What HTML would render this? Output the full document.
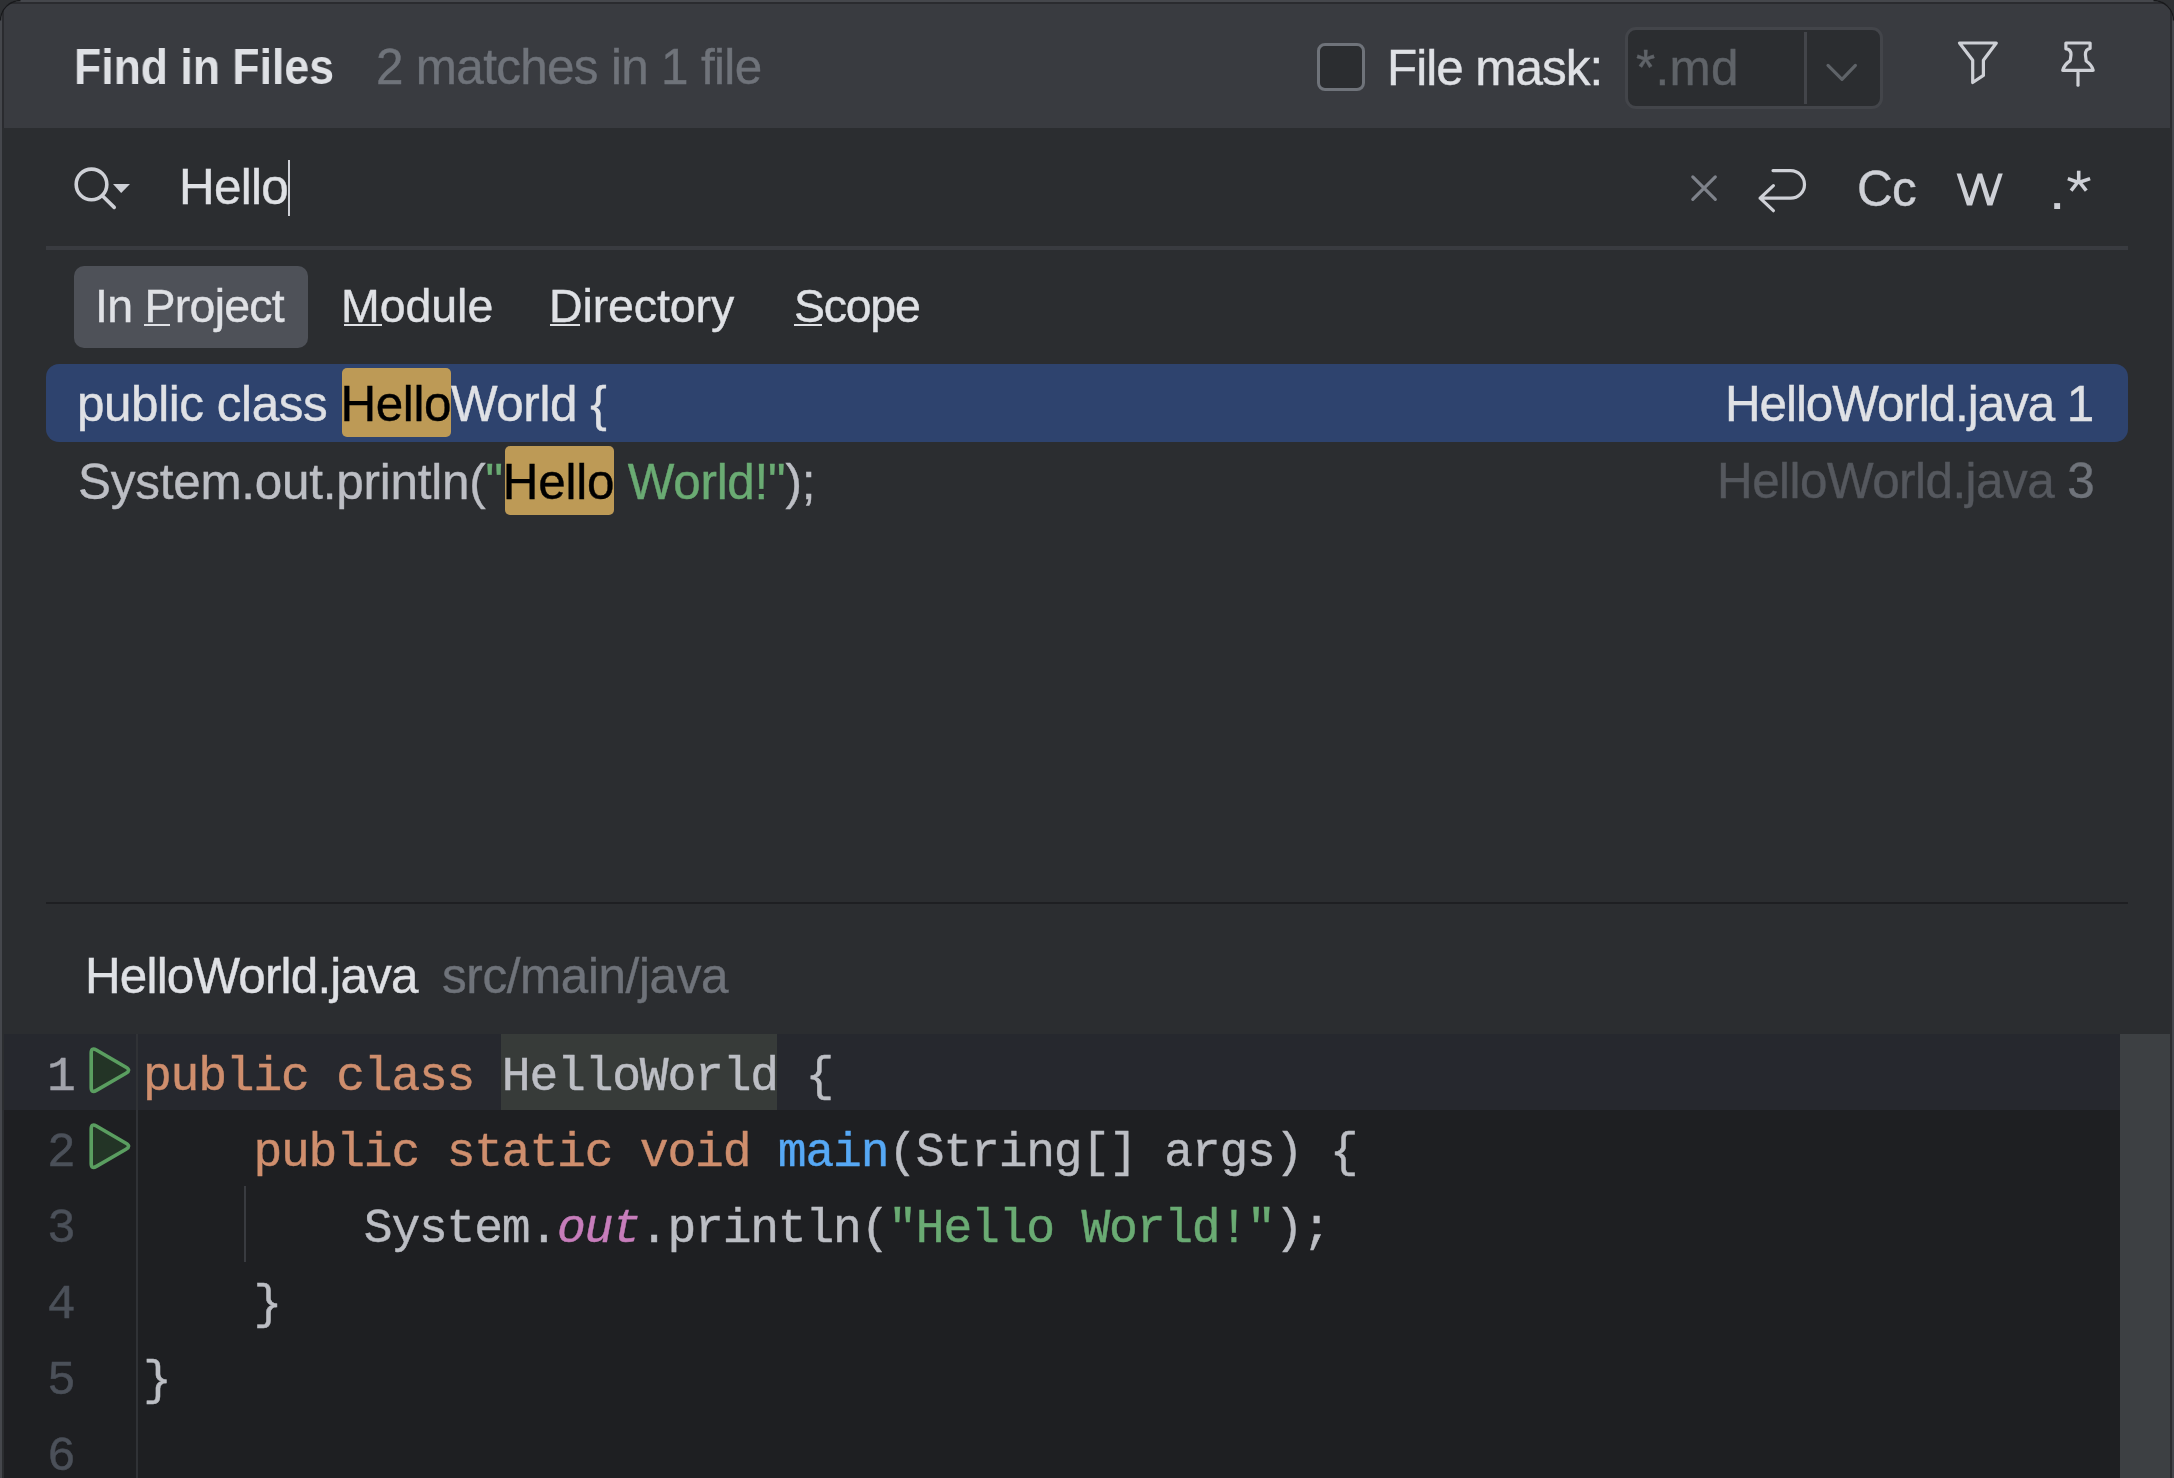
<!DOCTYPE html><html><head><meta charset="utf-8"><style>html,body{margin:0;padding:0;width:2174px;height:1478px;overflow:hidden;background:#45474C}</style></head><body><div style="position:absolute;left:0px;top:0px;width:2174px;height:1478px;background:#2E3033;"></div><div style="position:absolute;left:0;top:0;width:2174px;height:1478px;background:#45474C;border-radius:20px 20px 0 0;overflow:hidden;"><div style="position:absolute;left:2px;top:2px;width:2170px;height:1500px;background:#2A2B2F;"></div><div style="position:absolute;left:2px;top:128px;width:2170px;height:1400px;background:#2B2D30;"></div><div style="position:absolute;left:4px;top:4px;width:2166px;height:124px;background:#393B40;"></div></div><svg style="position:absolute;left:0;top:0" width="2174" height="30"><path d="M0.5,20.5 A20,20 0 0 1 20.5,0.5" fill="none" stroke="#18191B" stroke-width="1.3"/><path d="M2153.5,0.5 A20,20 0 0 1 2173.5,20.5" fill="none" stroke="#18191B" stroke-width="1.3"/></svg><div style="position:absolute;left:73.90px;top:37.38px;font-family:'Liberation Sans', sans-serif;font-size:49.4px;line-height:59px;font-weight:700;letter-spacing:0px;color:#DFE1E5;white-space:pre;-webkit-text-stroke-width:0.0px;will-change:transform;transform:scaleX(0.902);transform-origin:0 0;">Find in Files</div><div style="position:absolute;left:376.21px;top:37.38px;font-family:'Liberation Sans', sans-serif;font-size:49.4px;line-height:59px;font-weight:400;letter-spacing:-0.664px;color:#6F737A;white-space:pre;-webkit-text-stroke-width:0.4px;will-change:transform;">2 matches in 1 file</div><div style="position:absolute;left:1317px;top:43px;width:42px;height:42px;border:3.5px solid #6F737A;border-radius:8px;background:#2B2D30;"></div><div style="position:absolute;left:1387.44px;top:37.68px;font-family:'Liberation Sans', sans-serif;font-size:49.4px;line-height:59px;font-weight:400;letter-spacing:-0.989px;color:#DFE1E5;white-space:pre;-webkit-text-stroke-width:0.4px;will-change:transform;">File mask:</div><div style="position:absolute;left:1625px;top:27px;width:252px;height:76px;border:3px solid #43454A;border-radius:11px;background:#2B2D30;"></div><div style="position:absolute;left:1804px;top:32px;width:3px;height:72px;background:#43454A;"></div><div style="position:absolute;left:1636.36px;top:37.68px;font-family:'Liberation Sans', sans-serif;font-size:49.4px;line-height:59px;font-weight:400;letter-spacing:0.267px;color:#5F6368;white-space:pre;-webkit-text-stroke-width:0.4px;will-change:transform;">*.md</div><svg style="position:absolute;left:0;top:0" width="2174" height="130"><polyline points="1828,65.4 1842,79.4 1855.4,65.4" fill="none" stroke="#5F6368" stroke-width="3.2" stroke-linecap="round" stroke-linejoin="round"/><path d="M1959.5,43 L1996.3,43 L1983.4,60.2 L1983.4,75.4 L1972.7,82.5 L1972.7,60.2 Z" fill="none" stroke="#CED0D6" stroke-width="3.2" stroke-linejoin="round"/><path d="M2065.9,43 L2090.1,43 L2090.1,48.5 Q2085.4,49 2085.4,54.7 L2086.2,61 Q2092,65 2093.2,70.3 L2062.7,70.3 Q2064,65 2070.2,60.6 L2071,54.7 Q2071,49 2065.9,48.8 Z" fill="none" stroke="#CED0D6" stroke-width="3.2" stroke-linejoin="round"/><line x1="2078" y1="72.7" x2="2078" y2="85.2" stroke="#CED0D6" stroke-width="3.2" stroke-linecap="round"/></svg><svg style="position:absolute;left:0;top:130px" width="2174" height="100"><circle cx="91.5" cy="54.4" r="15.3" fill="none" stroke="#CED0D6" stroke-width="3.6"/><line x1="102.6" y1="66" x2="114.2" y2="77.4" stroke="#CED0D6" stroke-width="3.6" stroke-linecap="round"/><path d="M113,53.9 L130,53.9 L121.2,63.1 Z" fill="#CED0D6"/><line x1="1692.8" y1="46.9" x2="1715.3" y2="69.3" stroke="#7E828A" stroke-width="3.2" stroke-linecap="round"/><line x1="1715.3" y1="46.9" x2="1692.8" y2="69.3" stroke="#7E828A" stroke-width="3.2" stroke-linecap="round"/><path d="M1773,40.6 L1790.7,40.6 A13.8,13.8 0 0 1 1790.7,68.2 L1760.1,68.2 M1773.4,55.7 L1760.1,68.2 L1773.4,80.7" fill="none" stroke="#CED0D6" stroke-width="3.2" stroke-linecap="round" stroke-linejoin="round"/><rect x="2054.2" y="73.1" width="5.9" height="5.9" fill="#CED0D6"/><path d="M1956.6,43.5 L1961,43.5 L1969.3,68.3 L1977.6,43.5 L1982.1,43.5 L1990,68.3 L1998.3,43.5 L2002.8,43.5 L1992.4,75.5 L1987.3,75.5 L1979.8,51 L1972.1,75.5 L1966.9,75.5 Z" fill="#CED0D6"/><g stroke="#CED0D6" stroke-width="3.6"><line x1="2078.7" y1="40.7" x2="2078.7" y2="54"/><line x1="2067.8" y1="48.6" x2="2078.7" y2="52.5"/><line x1="2090.1" y1="48.6" x2="2078.7" y2="52.5"/><line x1="2071.1" y1="60.6" x2="2078.7" y2="51"/><line x1="2086.3" y1="60.6" x2="2078.7" y2="51"/></g></svg><div style="position:absolute;left:179.44px;top:157.48px;font-family:'Liberation Sans', sans-serif;font-size:49.4px;line-height:59px;font-weight:400;letter-spacing:-0.726px;color:#DFE1E5;white-space:pre;-webkit-text-stroke-width:0.4px;will-change:transform;">Hello</div><div style="position:absolute;left:288px;top:160px;width:2px;height:56px;background:#CED0D6;"></div><div style="position:absolute;left:1857.34px;top:159.28px;font-family:'Liberation Sans', sans-serif;font-size:49.4px;line-height:59px;font-weight:400;letter-spacing:-0.563px;color:#CED0D6;white-space:pre;-webkit-text-stroke-width:0.4px;will-change:transform;">Cc</div><div style="position:absolute;left:46px;top:246px;width:2082px;height:4px;background:#393B40;"></div><div style="position:absolute;left:74px;top:266px;width:234px;height:82px;background:#4E5158;border-radius:10px;"></div><div style="position:absolute;left:95.13px;top:277.89px;font-family:'Liberation Sans', sans-serif;font-size:46.5px;line-height:56px;font-weight:400;letter-spacing:-0.739px;color:#DFE1E5;white-space:pre;-webkit-text-stroke-width:0.4px;will-change:transform;">In Project</div><div style="position:absolute;left:144px;top:324px;width:26px;height:2px;background:#DFE1E5;"></div><div style="position:absolute;left:340.83px;top:277.89px;font-family:'Liberation Sans', sans-serif;font-size:46.5px;line-height:56px;font-weight:400;letter-spacing:-0.05px;color:#DFE1E5;white-space:pre;-webkit-text-stroke-width:0.4px;will-change:transform;">Module</div><div style="position:absolute;left:344px;top:324px;width:38px;height:2px;background:#DFE1E5;"></div><div style="position:absolute;left:548.53px;top:277.89px;font-family:'Liberation Sans', sans-serif;font-size:46.5px;line-height:56px;font-weight:400;letter-spacing:-0.112px;color:#DFE1E5;white-space:pre;-webkit-text-stroke-width:0.4px;will-change:transform;">Directory</div><div style="position:absolute;left:550px;top:324px;width:30px;height:2px;background:#DFE1E5;"></div><div style="position:absolute;left:794.04px;top:277.89px;font-family:'Liberation Sans', sans-serif;font-size:46.5px;line-height:56px;font-weight:400;letter-spacing:-1.277px;color:#DFE1E5;white-space:pre;-webkit-text-stroke-width:0.4px;will-change:transform;">Scope</div><div style="position:absolute;left:794px;top:324px;width:28px;height:2px;background:#DFE1E5;"></div><div style="position:absolute;left:46px;top:364px;width:2082px;height:78px;background:#2E436E;border-radius:13px;"></div><div style="position:absolute;left:342px;top:368px;width:109px;height:69px;background:#BD9A56;border-radius:5px;"></div><div style="position:absolute;left:505px;top:446px;width:109px;height:69px;background:#BD9A56;border-radius:5px;"></div><div style="position:absolute;left:77.16px;top:373.78px;font-family:'Liberation Sans', sans-serif;font-size:49.4px;line-height:59px;font-weight:400;letter-spacing:-0.42px;color:#DFE1E5;white-space:pre;-webkit-text-stroke-width:0.4px;will-change:transform;">public class <span style="color:#000">Hello</span>World {</div><div style="position:absolute;left:77.89px;top:451.68px;font-family:'Liberation Sans', sans-serif;font-size:49.4px;line-height:59px;font-weight:400;letter-spacing:-0.227px;color:#BCBEC4;white-space:pre;-webkit-text-stroke-width:0.4px;will-change:transform;">System.out.println(<span style="color:#6AAB73">"</span><span style="color:#000">Hello</span><span style="color:#6AAB73"> World!"</span>);</div><div style="position:absolute;left:1724.84px;top:373.58px;font-family:'Liberation Sans', sans-serif;font-size:49.4px;line-height:59px;font-weight:400;letter-spacing:-1.058px;color:#DFE1E5;white-space:pre;-webkit-text-stroke-width:0.4px;will-change:transform;">HelloWorld.java 1</div><div style="position:absolute;left:1716.84px;top:451.38px;font-family:'Liberation Sans', sans-serif;font-size:49.4px;line-height:59px;font-weight:400;letter-spacing:-0.522px;color:#55585E;white-space:pre;-webkit-text-stroke-width:0.4px;will-change:transform;">HelloWorld.java <span style="color:#6F737A">3</span></div><div style="position:absolute;left:46px;top:902px;width:2082px;height:2px;background:#1E1F22;"></div><div style="position:absolute;left:85.24px;top:945.58px;font-family:'Liberation Sans', sans-serif;font-size:49.4px;line-height:59px;font-weight:400;letter-spacing:-0.822px;color:#DFE1E5;white-space:pre;-webkit-text-stroke-width:0.4px;will-change:transform;">HelloWorld.java</div><div style="position:absolute;left:442.17px;top:945.58px;font-family:'Liberation Sans', sans-serif;font-size:49.4px;line-height:59px;font-weight:400;letter-spacing:-0.377px;color:#6F737A;white-space:pre;-webkit-text-stroke-width:0.4px;will-change:transform;">src/main/java</div><div style="position:absolute;left:4px;top:1034px;width:2116px;height:450px;background:#1E1F22;"></div><div style="position:absolute;left:4px;top:1034px;width:2116px;height:76px;background:#26282E;"></div><div style="position:absolute;left:2120px;top:1034px;width:50px;height:450px;background:#3D4043;"></div><div style="position:absolute;left:136px;top:1034px;width:2px;height:450px;background:#303236;"></div><div style="position:absolute;left:501px;top:1034px;width:276px;height:76px;background:#373B39;"></div><div style="position:absolute;left:244px;top:1186px;width:2px;height:76px;background:#393B40;"></div><svg style="position:absolute;left:0;top:1030px" width="200" height="150"><path d="M91.20,23.00 Q91.20,17.00 96.39,20.01 L126.01,37.19 Q131.20,40.20 126.01,43.21 L96.39,60.39 Q91.20,63.40 91.20,57.40 Z" fill="#233426" stroke="#5A9E60" stroke-width="3.6" stroke-linejoin="round"/><path d="M91.20,99.00 Q91.20,93.00 96.39,96.01 L126.01,113.19 Q131.20,116.20 126.01,119.21 L96.39,136.39 Q91.20,139.40 91.20,133.40 Z" fill="#233426" stroke="#5A9E60" stroke-width="3.6" stroke-linejoin="round"/></svg><div style="position:absolute;left:143.00px;top:1048.23px;font-family:'Liberation Mono', monospace;font-size:48.0px;line-height:58px;font-weight:400;letter-spacing:-1.2046874999999986px;color:#BCBEC4;white-space:pre;-webkit-text-stroke-width:0.45px;will-change:transform;"><span style="color:#CF8E6D">public</span> <span style="color:#CF8E6D">class</span> HelloWorld {</div><div style="position:absolute;left:47.00px;top:1048.23px;font-family:'Liberation Mono', monospace;font-size:48.0px;line-height:58px;font-weight:400;letter-spacing:-1.2046874999999986px;color:#A1A3AB;white-space:pre;-webkit-text-stroke-width:0.45px;will-change:transform;">1</div><div style="position:absolute;left:143.00px;top:1124.23px;font-family:'Liberation Mono', monospace;font-size:48.0px;line-height:58px;font-weight:400;letter-spacing:-1.2046874999999986px;color:#BCBEC4;white-space:pre;-webkit-text-stroke-width:0.45px;will-change:transform;">    <span style="color:#CF8E6D">public</span> <span style="color:#CF8E6D">static</span> <span style="color:#CF8E6D">void</span> <span style="color:#56A8F5">main</span>(String[] args) {</div><div style="position:absolute;left:47.00px;top:1124.23px;font-family:'Liberation Mono', monospace;font-size:48.0px;line-height:58px;font-weight:400;letter-spacing:-1.2046874999999986px;color:#4B5059;white-space:pre;-webkit-text-stroke-width:0.45px;will-change:transform;">2</div><div style="position:absolute;left:143.00px;top:1200.23px;font-family:'Liberation Mono', monospace;font-size:48.0px;line-height:58px;font-weight:400;letter-spacing:-1.2046874999999986px;color:#BCBEC4;white-space:pre;-webkit-text-stroke-width:0.45px;will-change:transform;">        System.<span style="color:#C77DBB;font-style:italic">out</span>.println(<span style="color:#6AAB73">"Hello World!"</span>);</div><div style="position:absolute;left:47.00px;top:1200.23px;font-family:'Liberation Mono', monospace;font-size:48.0px;line-height:58px;font-weight:400;letter-spacing:-1.2046874999999986px;color:#4B5059;white-space:pre;-webkit-text-stroke-width:0.45px;will-change:transform;">3</div><div style="position:absolute;left:143.00px;top:1276.23px;font-family:'Liberation Mono', monospace;font-size:48.0px;line-height:58px;font-weight:400;letter-spacing:-1.2046874999999986px;color:#BCBEC4;white-space:pre;-webkit-text-stroke-width:0.45px;will-change:transform;">    }</div><div style="position:absolute;left:47.00px;top:1276.23px;font-family:'Liberation Mono', monospace;font-size:48.0px;line-height:58px;font-weight:400;letter-spacing:-1.2046874999999986px;color:#4B5059;white-space:pre;-webkit-text-stroke-width:0.45px;will-change:transform;">4</div><div style="position:absolute;left:143.00px;top:1352.23px;font-family:'Liberation Mono', monospace;font-size:48.0px;line-height:58px;font-weight:400;letter-spacing:-1.2046874999999986px;color:#BCBEC4;white-space:pre;-webkit-text-stroke-width:0.45px;will-change:transform;">}</div><div style="position:absolute;left:47.00px;top:1352.23px;font-family:'Liberation Mono', monospace;font-size:48.0px;line-height:58px;font-weight:400;letter-spacing:-1.2046874999999986px;color:#4B5059;white-space:pre;-webkit-text-stroke-width:0.45px;will-change:transform;">5</div><div style="position:absolute;left:143.00px;top:1428.23px;font-family:'Liberation Mono', monospace;font-size:48.0px;line-height:58px;font-weight:400;letter-spacing:-1.2046874999999986px;color:#BCBEC4;white-space:pre;-webkit-text-stroke-width:0.45px;will-change:transform;"></div><div style="position:absolute;left:47.00px;top:1428.23px;font-family:'Liberation Mono', monospace;font-size:48.0px;line-height:58px;font-weight:400;letter-spacing:-1.2046874999999986px;color:#4B5059;white-space:pre;-webkit-text-stroke-width:0.45px;will-change:transform;">6</div></body></html>
